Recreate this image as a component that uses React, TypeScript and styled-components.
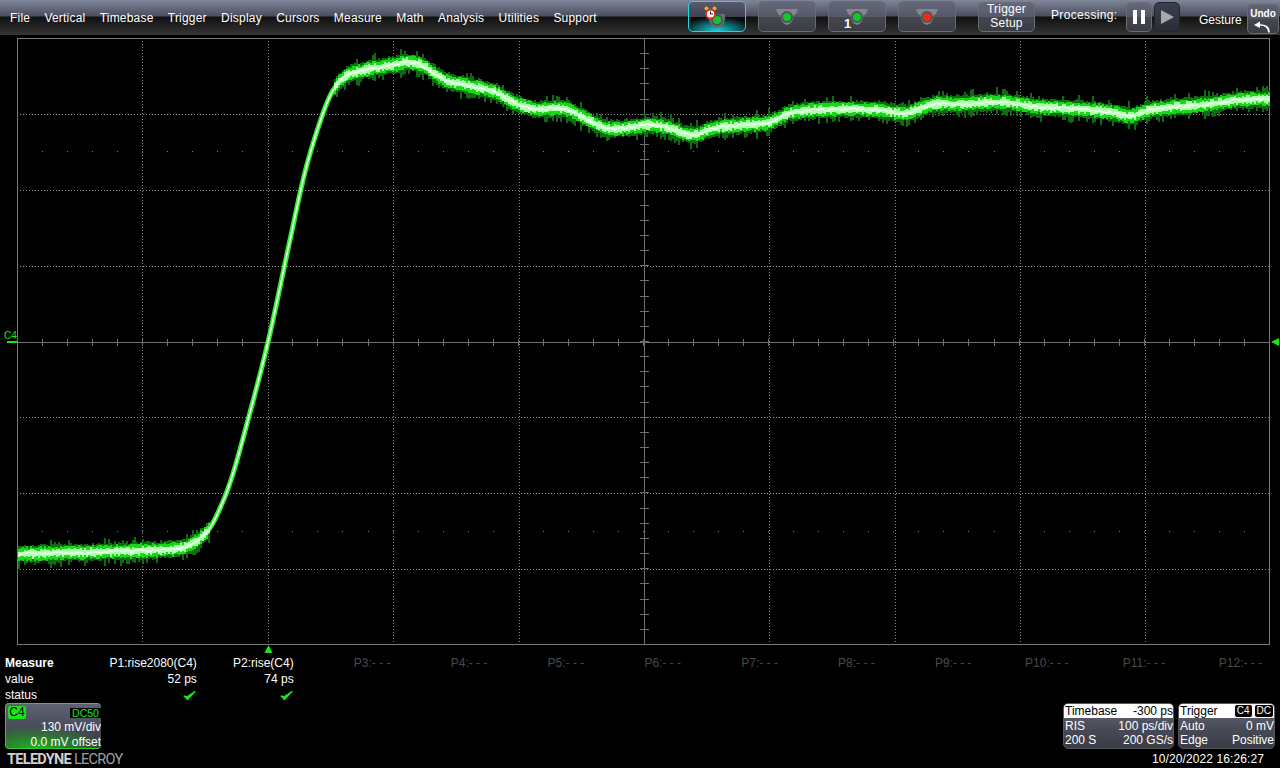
import React, { useMemo } from "react"
import styled, { createGlobalStyle } from "styled-components"

const GlobalStyle = createGlobalStyle`
  html, body {
    margin: 0;
    background: #000;
    overflow: hidden;
  }
  body {
    font-family: "Liberation Sans", Arial, sans-serif;
    font-size: 12px;
    color: #fff;
  }
`

const MENU = ["File", "Vertical", "Timebase", "Trigger", "Display", "Cursors", "Measure", "Math", "Analysis", "Utilities", "Support"]
const V_LINES = [142, 268, 393, 519, 769, 895, 1020, 1145]
const H_LINES = [114, 190, 266, 417, 493, 569]
const LEFT = 17
const RIGHT = 1269
const TOP = 38
const BOTTOM = 644
const MID_X = 644
const MID_Y = 342

// trace centre line picked off the reference, page coordinates
const TRACE: [number, number][] = [
  [17, 554], [100, 552], [175, 549], [190, 545], [205, 534], [215, 519], [230, 483], [245, 431], [268, 342],
  [290, 240], [305, 172], [320, 122], [330, 96], [340, 81], [350, 74], [370, 69], [393, 65], [410, 62],
  [425, 67], [445, 80], [470, 86], [495, 92], [515, 103], [535, 109], [565, 109], [585, 118], [605, 128],
  [625, 128], [650, 125], [670, 128], [692, 135], [715, 128], [745, 125], [770, 122], [790, 113], [815, 110],
  [850, 109], [880, 110], [905, 113], [935, 104], [960, 104], [1000, 102], [1040, 107], [1080, 109],
  [1110, 112], [1130, 116], [1150, 110], [1175, 107], [1210, 104], [1240, 100], [1269, 99],
]

const traceY = (x: number) => {
  let i = 0
  while (i < TRACE.length - 2 && TRACE[i + 1][0] < x) i++
  const p0 = TRACE[Math.max(i - 1, 0)]
  const p1 = TRACE[i]
  const p2 = TRACE[i + 1]
  const p3 = TRACE[Math.min(i + 2, TRACE.length - 1)]
  const t = (x - p1[0]) / (p2[0] - p1[0])
  const m1 = ((p2[1] - p0[1]) / (p2[0] - p0[0])) * (p2[0] - p1[0])
  const m2 = ((p3[1] - p1[1]) / (p3[0] - p1[0])) * (p2[0] - p1[0])
  const t2 = t * t
  const t3 = t2 * t
  return (2 * t3 - 3 * t2 + 1) * p1[1] + (t3 - 2 * t2 + t) * m1 + (-2 * t3 + 3 * t2) * p2[1] + (t3 - t2) * m2
}

const buildTrace = () => {
  let seed = 20221020
  const rnd = () => {
    seed = (seed * 1664525 + 1013904223) % 4294967296
    return seed / 4294967296
  }
  let dark = ""
  let mid = ""
  let bright = ""
  let core = ""
  let body = ""
  for (let x = LEFT + 2; x <= RIGHT; x += 2) {
    const y = traceY(x)
    const slope = Math.abs(traceY(x + 1) - y)
    const damp = slope > 1.5 ? 0.3 : 1
    const spike = rnd() > 0.65 ? 2 + rnd() * 4 : 0
    const up = (7 + rnd() * 2.5 + spike * (rnd() > 0.5 ? 1 : 0)) * damp
    const down = (7 + rnd() * 2.5 + spike) * damp
    dark += `M${x} ${(y - up).toFixed(0)}V${(y + down).toFixed(0)}`
    const mu = (5 + rnd() * 2.5) * damp
    const md = (5 + rnd() * 2.5) * damp
    mid += `M${x} ${(y - mu).toFixed(0)}V${(y + md).toFixed(0)}`
    const bu = 2 + rnd() * 3
    const bd = 2 + rnd() * 3
    bright += `M${x} ${(y - bu * damp).toFixed(0)}V${(y + bd * damp).toFixed(0)}`
    const jitter = (rnd() - 0.5) * 3 * damp
    core += `${core ? "L" : "M"}${x} ${(y + jitter).toFixed(1)}`
    body += `${body ? "L" : "M"}${x} ${y.toFixed(1)}`
  }
  return { dark, mid, bright, core, body }
}

const Scope = () => {
  const trace = useMemo(buildTrace, [])
  const hTicks: number[] = []
  for (let x = LEFT + 25; x < RIGHT; x += 25.04) hTicks.push(Math.round(x))
  const vTicks: number[] = []
  for (let y = TOP + 15.15; y < BOTTOM; y += 15.15) vTicks.push(Math.round(y))

  return (
    <ScopeSvg viewBox="0 35 1280 618" width={1280} height={618}>
      <defs>
        <filter id="soft" x="0" y="0" width="100%" height="100%" filterUnits="userSpaceOnUse" primitiveUnits="userSpaceOnUse">
          <feGaussianBlur stdDeviation="0.6" />
        </filter>
      </defs>
      <g stroke="#8c8c8c" strokeDasharray="1 2" shapeRendering="crispEdges">
        {V_LINES.map((x) => (
          <line key={x} x1={x + 0.5} x2={x + 0.5} y1={TOP} y2={BOTTOM} />
        ))}
        {H_LINES.map((y) => (
          <line key={y} x1={LEFT} x2={RIGHT} y1={y + 0.5} y2={y + 0.5} />
        ))}
      </g>
      <g fill="#7c7c7c" shapeRendering="crispEdges">
        {hTicks.map((x) => (
          <React.Fragment key={x}>
            <rect x={x} y={151} width={1} height={1} />
            <rect x={x} y={531} width={1} height={1} />
          </React.Fragment>
        ))}
      </g>
      <g stroke="#707070" shapeRendering="crispEdges">
        <line x1={LEFT} x2={RIGHT} y1={MID_Y + 0.5} y2={MID_Y + 0.5} />
        <line x1={MID_X + 0.5} x2={MID_X + 0.5} y1={TOP} y2={BOTTOM} />
        {hTicks.map((x) => (
          <line key={x} x1={x + 0.5} x2={x + 0.5} y1={MID_Y - 3} y2={MID_Y + 4} />
        ))}
        {vTicks.map((y) => (
          <line key={y} x1={MID_X - 4} x2={MID_X + 5} y1={y + 0.5} y2={y + 0.5} />
        ))}
      </g>
      <rect x={LEFT + 0.5} y={TOP + 0.5} width={RIGHT - LEFT} height={BOTTOM - TOP} fill="none" stroke="#7a7a7a" shapeRendering="crispEdges" />

      <g fill="none" filter="url(#soft)">
        <path d={trace.dark} stroke="#0a6c0a" strokeWidth={2} />
        <path d={trace.mid} stroke="#14d814" strokeWidth={2} />
        <path d={trace.body} stroke="#2cf02c" strokeWidth={5} />
        <path d={trace.bright} stroke="#b0ffb0" strokeWidth={2} />
        <path d={trace.core} stroke="#e8ffe8" strokeWidth={1.6} />
      </g>

      <text x={4} y={339} fill="#19e619" fontSize={10}>C4</text>
      <rect x={7} y={341} width={10} height={2} fill="#19e619" />
      <polygon points="1271,342 1279,338 1279,346" fill="#19e619" />
      <polygon points="268.5,645 272.5,653 264.5,653" fill="#19e619" />
    </ScopeSvg>
  )
}

const Lamp: React.FC<{ color: string; flat?: boolean }> = ({ color, flat }) => (
  <svg width="24" height="18" viewBox="0 0 24 18">
    {!flat && <path d="M1 1H23L21 6L18.5 7.5Q18 15.5 12 17Q6 15.5 5.5 7.5L3 6Z" fill="#85878e" />}
    {flat && <path d="M4 3H20V8Q19 16 12 17Q5 16 4 8Z" fill="#6c6e76" />}
    <circle cx="12" cy="9" r="6" fill="#50525e" />
    <circle cx="12" cy="9" r="4" fill={color} />
  </svg>
)

const Clock = () => (
  <svg width="13" height="14" viewBox="0 0 13 14">
    <circle cx="2.5" cy="2.5" r="2" fill="#f0b020" />
    <circle cx="10.5" cy="2.5" r="2" fill="#f0b020" />
    <circle cx="6.5" cy="8" r="5.5" fill="#d8301c" />
    <circle cx="6.5" cy="8" r="3.6" fill="#fff" />
    <path d="M6.5 5.5V8H9" stroke="#222" fill="none" />
  </svg>
)

const Check = () => (
  <svg width="13" height="11" viewBox="0 0 13 11">
    <path d="M1 6L4.5 9.5L12 1.5L4.5 6.5Z" fill="#19e619" stroke="#19e619" strokeWidth="1.2" strokeLinejoin="round" />
  </svg>
)

const measureCells = ["P1:rise2080(C4)", "P2:rise(C4)", "P3:- - -", "P4:- - -", "P5:- - -", "P6:- - -", "P7:- - -", "P8:- - -", "P9:- - -", "P10:- - -", "P11:- - -", "P12:- - -"]

export default function App() {
  return (
    <Screen>
      <GlobalStyle />
      <Toolbar>
        <Menu>
          {MENU.map((m) => (
            <MenuItem key={m}>{m}</MenuItem>
          ))}
        </Menu>
        <ModeGroup>
          <ModeButton $active>
            <ClockSlot><Clock /></ClockSlot>
            <LampSlot $low><Lamp color="#10c828" flat /></LampSlot>
          </ModeButton>
          <ModeButton>
            <LampSlot><Lamp color="#10c828" /></LampSlot>
          </ModeButton>
          <ModeButton>
            <LampSlot><Lamp color="#10c828" /></LampSlot>
            <One>1</One>
          </ModeButton>
          <ModeButton>
            <LampSlot><Lamp color="#f02a10" /></LampSlot>
          </ModeButton>
        </ModeGroup>
        <SetupButton>Trigger<br />Setup</SetupButton>
        <ProcessingLabel>Processing:</ProcessingLabel>
        <PlayButton>
          <svg width="12" height="16" viewBox="0 0 12 16">
            <rect x="0" y="1" width="4" height="14" fill="#fff" />
            <rect x="8" y="1" width="4" height="14" fill="#fff" />
          </svg>
        </PlayButton>
        <PlayButton $dark>
          <svg width="14" height="16" viewBox="0 0 14 16">
            <polygon points="1,1 14,8 1,15" fill="#a6a8ae" />
          </svg>
        </PlayButton>
        <GestureLabel>Gesture</GestureLabel>
        <UndoButton>
          <UndoText>Undo</UndoText>
          <svg width="20" height="13" viewBox="0 0 20 13">
            <path d="M16 12.5C16 7 12 4.5 6 5" fill="none" stroke="#fff" strokeWidth="1.6" />
            <polygon points="1,5 7,1.5 7,8" fill="#fff" />
          </svg>
        </UndoButton>
      </Toolbar>

      <Scope />

      <Footer>
        <MeasureGrid>
          <MeasureHead>Measure</MeasureHead>
          {measureCells.map((c, i) => (
            <MeasureCell key={c} $off={i > 1}>{c}</MeasureCell>
          ))}
          <RowLabel>value</RowLabel>
          <MeasureCell>52 ps</MeasureCell>
          <MeasureCell>74 ps</MeasureCell>
          <RowFill />
          <RowLabel>status</RowLabel>
          <MeasureCell><Check /></MeasureCell>
          <MeasureCell><Check /></MeasureCell>
          <RowFill />
        </MeasureGrid>

        <BottomRow>
          <LeftColumn>
            <Descriptor>
              <DescriptorTop>
                <ChannelTag>C4</ChannelTag>
                <CouplingTag>DC50</CouplingTag>
              </DescriptorTop>
              <DescriptorLine>130 mV/div</DescriptorLine>
              <DescriptorLine>0.0 mV offset</DescriptorLine>
            </Descriptor>
            <Logo>TELEDYNE <LogoLight>LECROY</LogoLight></Logo>
          </LeftColumn>
          <RightColumn>
            <InfoBoxes>
              <InfoBox $width={111}>
                <InfoHead><span>Timebase</span><span>-300 ps</span></InfoHead>
                <InfoBody>
                  <InfoRow><span>RIS</span><span>100 ps/div</span></InfoRow>
                  <InfoRow><span>200 S</span><span>200 GS/s</span></InfoRow>
                </InfoBody>
              </InfoBox>
              <InfoBox $width={97}>
                <InfoHead>
                  <span>Trigger</span>
                  <Badges><Badge>C4</Badge><Badge>DC</Badge></Badges>
                </InfoHead>
                <InfoBody>
                  <InfoRow><span>Auto</span><span>0 mV</span></InfoRow>
                  <InfoRow><span>Edge</span><span>Positive</span></InfoRow>
                </InfoBody>
              </InfoBox>
            </InfoBoxes>
            <DateStamp>10/20/2022 16:26:27</DateStamp>
          </RightColumn>
        </BottomRow>
      </Footer>
    </Screen>
  )
}

const Screen = styled.div`
  width: 1280px;
  height: 768px;
  background: #000;
  overflow: hidden;
  display: flex;
  flex-direction: column;
`

const Toolbar = styled.div`
  flex: 0 0 35px;
  display: flex;
  align-items: flex-start;
  background: linear-gradient(#7f8699 0, #4a4e5e 16px, #101010 17px, #353535 35px);
`

const Menu = styled.div`
  flex: 0 0 688px;
  display: flex;
  gap: 14.3px;
  padding: 11px 0 0 10px;
  box-sizing: border-box;
  letter-spacing: 0.2px;
`

const MenuItem = styled.div`
  line-height: 14px;
  color: #fff;
`

const ModeGroup = styled.div`
  display: flex;
  gap: 12px;
  padding-top: 1px;
`

const ModeButton = styled.div<{ $active?: boolean }>`
  position: relative;
  width: 58px;
  height: 31px;
  box-sizing: border-box;
  border-radius: 5px;
  border: 1px solid ${(p) => (p.$active ? "#1fd8e0" : "#6a6c74")};
  background: ${(p) =>
    p.$active
      ? "radial-gradient(ellipse 36px 14px at 50% 100%, #18d0d8 0, #0c6a70 55%, transparent 100%), linear-gradient(#565a6c 0, #3e4150 50%, #0c0c0c 51%, #0c0c0c 100%)"
      : "linear-gradient(#646879 0, #555867 50%, #45474e 51%, #3c3d43 100%)"};
  display: flex;
  justify-content: center;
`

const LampSlot = styled.div<{ $low?: boolean }>`
  padding-top: ${(p) => (p.$low ? "9px" : "6px")};
  line-height: 0;
`

const ClockSlot = styled.div`
  position: absolute;
  left: 15px;
  top: 4px;
  z-index: 1;
  line-height: 0;
`

const One = styled.div`
  position: absolute;
  left: 15px;
  top: 15px;
  font-size: 13px;
  font-weight: bold;
  line-height: 14px;
`

const SetupButton = styled.div`
  margin: 2px 0 0 22px;
  width: 57px;
  height: 30px;
  box-sizing: border-box;
  border: 1px solid #6a6c74;
  border-radius: 5px;
  background: linear-gradient(#646879 0, #555867 50%, #45474e 51%, #3c3d43 100%);
  text-align: center;
  line-height: 13.5px;
  letter-spacing: 0.2px;
`

const ProcessingLabel = styled.div`
  margin: 8px 0 0 16px;
  width: 66px;
  line-height: 14px;
  white-space: nowrap;
  letter-spacing: 0.35px;
`

const PlayButton = styled.div<{ $dark?: boolean }>`
  margin: 2px 0 0 ${(p) => (p.$dark ? "2px" : "9px")};
  width: 26px;
  height: 30px;
  box-sizing: border-box;
  border: 1px solid ${(p) => (p.$dark ? "#23252c" : "#6a6c74")};
  border-radius: 5px;
  background: ${(p) =>
    p.$dark
      ? "linear-gradient(#3c3f4e, #2a2c36)"
      : "linear-gradient(#646879 0, #555867 50%, #45474e 51%, #3c3d43 100%)"};
  display: flex;
  align-items: center;
  justify-content: center;
`

const GestureLabel = styled.div`
  margin: 13px 0 0 19px;
  width: 44px;
  line-height: 14px;
`

const UndoButton = styled.div`
  margin: 4px 0 0 4px;
  width: 32px;
  height: 30px;
  box-sizing: border-box;
  border: 1px solid #6a6c74;
  border-radius: 5px;
  padding-top: 3px;
  background: linear-gradient(#5e6272 0, #50535f 50%, #45474e 51%, #3c3d43 100%);
  display: flex;
  flex-direction: column;
  align-items: center;
`

const UndoText = styled.div`
  font-size: 10px;
  font-weight: bold;
  line-height: 12px;
`

const ScopeSvg = styled.svg`
  display: block;
  flex: 0 0 618px;
`

const Footer = styled.div`
  flex: 1;
  padding: 2px 5px 0 5px;
  display: flex;
  flex-direction: column;
`

const MeasureGrid = styled.div`
  display: grid;
  grid-template-columns: 95px repeat(12, 96.85px);
  grid-auto-rows: 16px;
  line-height: 16px;
`

const MeasureHead = styled.div`
  font-weight: bold;
`

const RowLabel = styled.div``

const RowFill = styled.div`
  grid-column: span 10;
`

const MeasureCell = styled.div<{ $off?: boolean }>`
  text-align: right;
  white-space: nowrap;
  color: ${(p) => (p.$off ? "#4a4a4a" : "#fff")};
  svg {
    vertical-align: -2px;
    margin-right: 1px;
  }
`

const BottomRow = styled.div`
  display: flex;
  justify-content: space-between;
`

const LeftColumn = styled.div`
  display: flex;
  flex-direction: column;
`

const Descriptor = styled.div`
  width: 96px;
  height: 46px;
  box-sizing: border-box;
  border: 1px solid #34c834;
  border-right-width: 0;
  border-radius: 4px;
  padding: 2px 0 0 2px;
  overflow: hidden;
  background: radial-gradient(ellipse 75px 22px at 30% 100%, #22b422 0, rgba(31, 168, 31, 0.45) 60%, transparent 100%),
    linear-gradient(#5e6274 0, #4a4d5a 50%, #33363c 100%);
`

const DescriptorTop = styled.div`
  display: flex;
  justify-content: space-between;
  align-items: center;
  height: 13px;
`

const ChannelTag = styled.div`
  width: 18px;
  height: 13px;
  background: #19e619;
  border-radius: 2px;
  color: #000;
  line-height: 13px;
  text-align: center;
`

const CouplingTag = styled.div`
  width: 31px;
  height: 10px;
  background: #000;
  color: #19e619;
  font-size: 10.5px;
  line-height: 10px;
  text-align: center;
`

const DescriptorLine = styled.div`
  text-align: right;
  white-space: nowrap;
  line-height: 14px;
  margin-top: 1px;
`

const Logo = styled.div`
  margin: 3px 0 0 2px;
  font-family: "Liberation Sans Narrow", "Roboto", sans-serif;
  font-size: 14.5px;
  font-weight: bold;
  line-height: 15px;
  color: #d0d0d0;
  letter-spacing: -0.7px;
  white-space: nowrap;
`

const LogoLight = styled.span`
  font-weight: normal;
  color: #a0a0a0;
`

const RightColumn = styled.div`
  display: flex;
  flex-direction: column;
  align-items: flex-end;
`

const InfoBoxes = styled.div`
  display: flex;
  gap: 4px;
`

const InfoBox = styled.div<{ $width: number }>`
  width: ${(p) => p.$width}px;
  height: 46px;
  box-sizing: border-box;
  border: 1px solid #55575f;
  border-radius: 5px;
  overflow: hidden;
  background: linear-gradient(#6c7082 0, #4a4c58 50%, #3a3c44 100%);
`

const InfoHead = styled.div`
  height: 14px;
  padding: 0 0 0 1px;
  background: #fff;
  color: #000;
  line-height: 14px;
  display: flex;
  justify-content: space-between;
  white-space: nowrap;
`

const InfoBody = styled.div`
  padding: 1px 0 0 1px;
`

const InfoRow = styled.div`
  display: flex;
  justify-content: space-between;
  line-height: 14px;
  white-space: nowrap;
`

const Badges = styled.div`
  display: flex;
  gap: 1px;
`

const Badge = styled.div`
  background: #000;
  color: #fff;
  border: 1px solid #fff;
  border-radius: 3px;
  font-size: 10px;
  line-height: 10px;
  padding: 1px 2px;
`

const DateStamp = styled.div`
  margin: 3px 11px 0 0;
  line-height: 14px;
  white-space: nowrap;
  letter-spacing: 0.1px;
`
